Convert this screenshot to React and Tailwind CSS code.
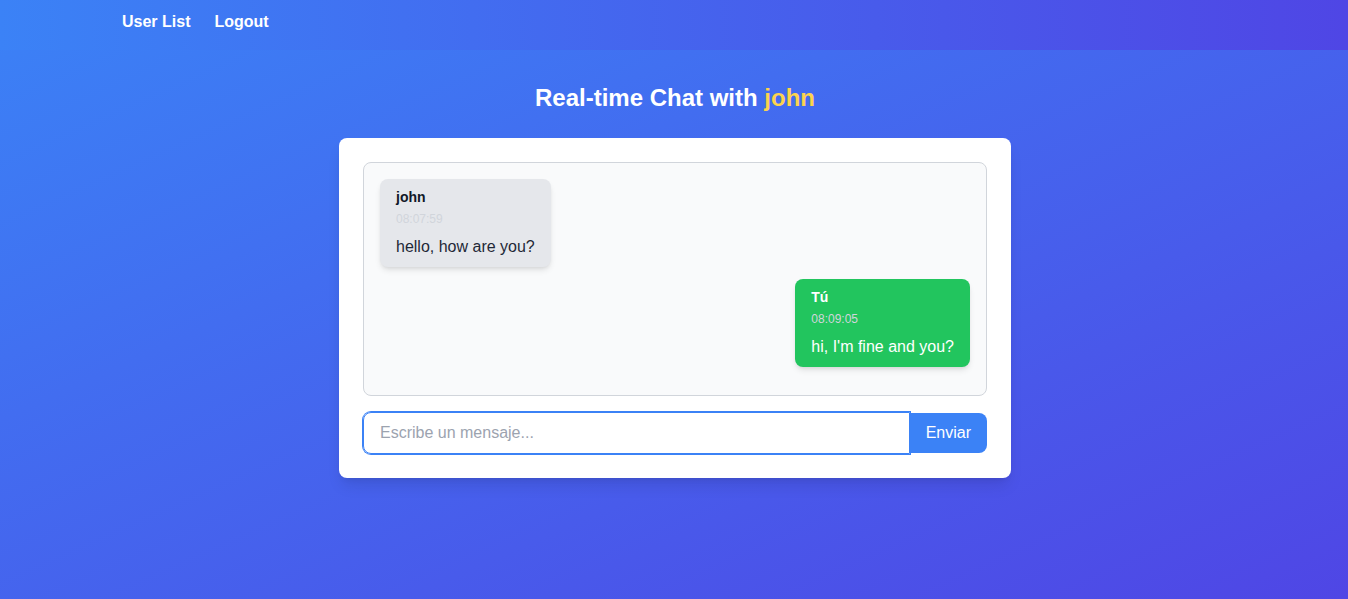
import React from 'react';

const messages = [
  { id: 1, from: 'john', time: '08:07:59', text: 'hello, how are you?', mine: false },
  { id: 2, from: 'Tú', time: '08:09:05', text: "hi, I'm fine and you?", mine: true },
];

const App = () => {
  return (
    <div className="min-h-screen bg-linear-to-br/srgb from-[#3b82f6] to-[#4f46e5] font-['Liberation_Sans',Arial,sans-serif]">
      {/* Navbar */}
      <nav className="h-[50px] bg-linear-to-r/srgb from-[#3b82f6] to-[#4f46e5]">
        <div className="max-w-6xl mx-auto px-6 h-full flex items-center">
          <div className="flex gap-6 -mt-[6px]">
            <a href="#" className="text-white font-bold text-base">User List</a>
            <a href="#" className="text-white font-bold text-base">Logout</a>
          </div>
        </div>
      </nav>

      <main className="flex flex-col items-center pt-8 pl-[2px]">
        <h1 className="text-2xl font-bold text-white mb-6">
          Real-time Chat with <span className="text-[#fcd34d]">john</span>
        </h1>

        <div className="w-full max-w-2xl bg-white rounded-lg shadow-lg p-6">
          {/* Messages */}
          <div className="border border-[#d1d5db] rounded-lg bg-[#f9fafb] p-4 flex flex-col">
            {messages.map((m) => (
              <div key={m.id} className={`flex mb-3 ${m.mine ? 'justify-end' : 'justify-start'}`}>
                <div
                  className={`px-4 py-2 rounded-lg shadow-md ${
                    m.mine ? 'bg-[#22c55e] text-white' : 'bg-[#e5e7eb] text-[#1f2937]'
                  }`}
                >
                  <p className={`text-sm font-bold ${m.mine ? 'text-white' : 'text-[#111827]'}`}>{m.from}</p>
                  <p className="text-xs text-[#d1d5db] mt-1">{m.time}</p>
                  <p className="text-base mt-2">{m.text}</p>
                </div>
              </div>
            ))}
          </div>

          {/* Input */}
          <div className="flex items-center mt-4">
            <input
              type="text"
              placeholder="Escribe un mensaje..."
              className="flex-1 h-[42px] px-4 text-base border border-[#3b82f6] rounded-l-lg ring-1 ring-[#3b82f6] outline-none placeholder:text-[#9ca3af]"
            />
            <button className="h-10 px-4 bg-[#3b82f6] text-white text-base rounded-r-lg">
              Enviar
            </button>
          </div>
        </div>
      </main>
    </div>
  );
};

export default App;
